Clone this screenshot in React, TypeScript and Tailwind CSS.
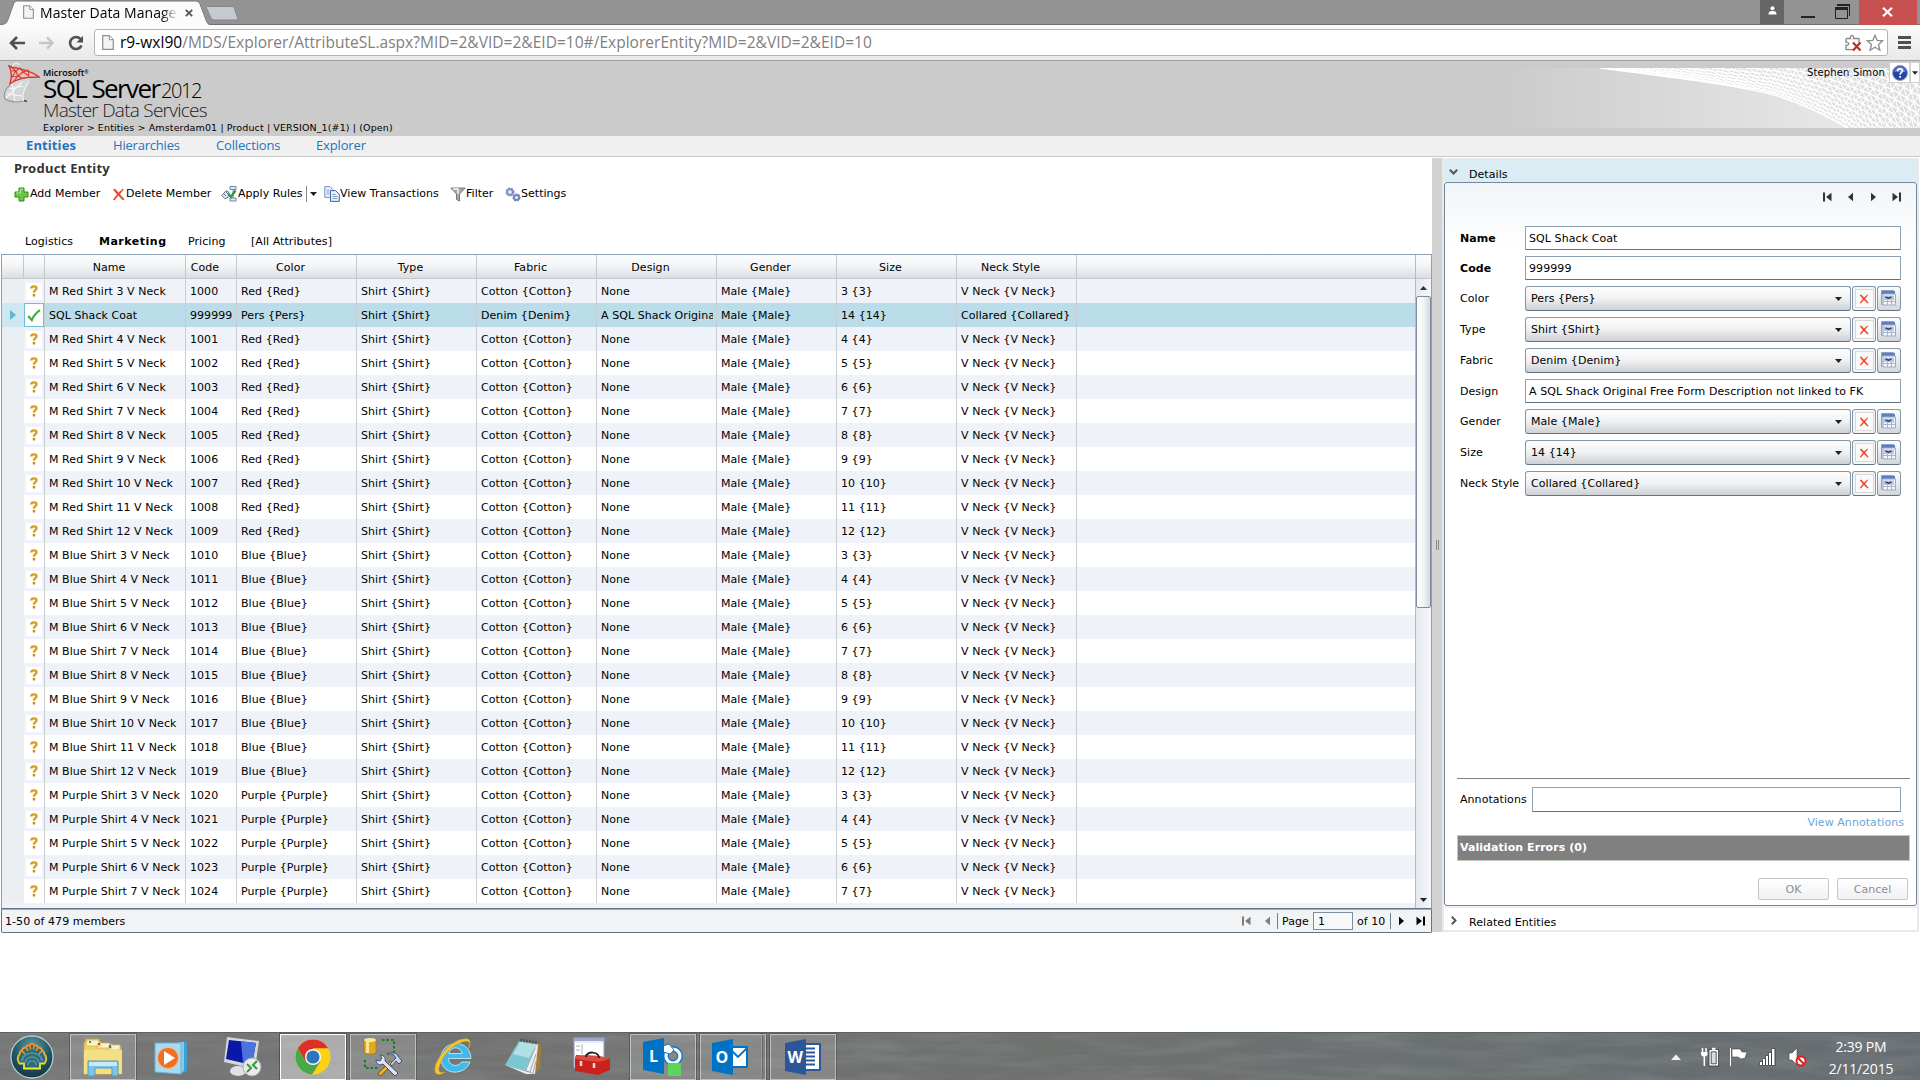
import React from 'react';

interface Member {
  name: string;
  code: string;
  color: string;
  type: string;
  fabric: string;
  design: string;
  gender: string;
  size: string;
  neck: string;
  selected?: boolean;
}

const pair = (value: string | number) => `${value} {${value}}`;

const buildMember = (color: string, size: number, code: number): Member => ({
  name: `M ${color} Shirt ${size} V Neck`,
  code: String(code),
  color: pair(color),
  type: pair('Shirt'),
  fabric: pair('Cotton'),
  design: 'None',
  gender: pair('Male'),
  size: pair(size),
  neck: pair('V Neck'),
});

const buildRange = (color: string, count: number, firstCode: number) =>
  Array.from({ length: count }, (_, i) => buildMember(color, i + 3, firstCode + i));

const coat: Member = {
  name: 'SQL Shack Coat',
  code: '999999',
  color: pair('Pers'),
  type: pair('Shirt'),
  fabric: pair('Denim'),
  design: 'A SQL Shack Original Free Form Description not linked to FK',
  gender: pair('Male'),
  size: pair(14),
  neck: pair('Collared'),
  selected: true,
};

const [firstRed, ...otherReds] = buildRange('Red', 10, 1000);
const members: Member[] = [
  firstRed,
  coat,
  ...otherReds,
  ...buildRange('Blue', 10, 1010),
  ...buildRange('Purple', 5, 1020),
];

const columns: { key: Exclude<keyof Member, 'selected'>; label: string; width: string }[] = [
  { key: 'name', label: 'Name', width: 'w-[141px]' },
  { key: 'code', label: 'Code', width: 'w-[51px]' },
  { key: 'color', label: 'Color', width: 'w-[120px]' },
  { key: 'type', label: 'Type', width: 'w-[120px]' },
  { key: 'fabric', label: 'Fabric', width: 'w-[120px]' },
  { key: 'design', label: 'Design', width: 'w-[120px]' },
  { key: 'gender', label: 'Gender', width: 'w-[120px]' },
  { key: 'size', label: 'Size', width: 'w-[120px]' },
  { key: 'neck', label: 'Neck Style', width: 'w-[120px]' },
];

/* ---------- Icons ---------- */

const PageIcon: React.FC<{ className?: string }> = ({ className }) => (
  <svg className={className} width="12" height="15" viewBox="0 0 12 15">
    <path d="M.7.7h6.6l4 4v9.6H.7z" fill="#f4f4f4" stroke="#8e8e8e" strokeWidth="1.2" />
    <path d="M7.3.7v4h4" fill="#fff" stroke="#8e8e8e" />
  </svg>
);

const PlusIcon = () => (
  <svg width="15" height="15" viewBox="0 0 15 15">
    <path d="M5 1h5v4h4v5h-4v4H5v-4H1V5h4z" fill="#6cc644" stroke="#2f8a1c" />
    <path d="M6 2.2h3M2.2 6h4V2.5" fill="none" stroke="#b8eaa0" />
  </svg>
);

const CrossIcon: React.FC<{ size?: number }> = ({ size = 13 }) => (
  <svg width={size} height={size} viewBox="0 0 13 13">
    <path d="M1 1.5 3 .7 6.500 4.600 11 .5l.8.8L8 6.300l4.500 5-1.500 1.200-4.600-4.700L2.500 12.500 1 11.500l4-5z" fill="#ef4a30" />
  </svg>
);

const RulesIcon = () => (
  <svg width="16" height="16" viewBox="0 0 16 16">
    <path d="M9 .5h6v3H9zM9 12h6v3H9zM12 4v8" fill="#dfe9f7" stroke="#6b86b5" />
    <path d="M.8 9.5 5 4.800l3 1.500-1 5-3 1.500z" fill="#e4e8ef" stroke="#5e6f8e" />
    <path d="M3 8l2 2M5 6l2 2" stroke="#5e6f8e" />
    <path d="m7.500 8 2.500 3 4.500-6.500" fill="none" stroke="#2c9a28" strokeWidth="2.2" />
  </svg>
);

const TransactionsIcon = () => (
  <svg width="16" height="16" viewBox="0 0 16 16">
    <path d="M.8.6h5l3 3v7.800h-8z" fill="#eef4fc" stroke="#6d8fc2" />
    <path d="M6.500 4.600h5l3.800 3.600v7.200H6.500z" fill="#e6effa" stroke="#41639c" />
    <path d="M2.500 4h3M2.500 6h3M2.500 8h3M8.500 8.500h3M8.500 10.500h5M8.500 12.500h5" stroke="#7f9fd0" />
  </svg>
);

const FilterIcon = () => (
  <svg width="16" height="15" viewBox="0 0 16 15">
    <path d="M.8 1h14.400L9.500 7v7l-3-1.500V7z" fill="#a6a8aa" stroke="#77797b" />
    <path d="M3 2h5L8 7" fill="none" stroke="#f4f4f4" strokeWidth="1.5" />
  </svg>
);

const GearsIcon = () => (
  <svg width="16" height="15" viewBox="0 0 16 15">
    <circle cx="5" cy="5" r="3.2" fill="#c4d0ec" stroke="#7285bd" strokeWidth="2.6" strokeDasharray="1.700 .9" />
    <circle cx="5" cy="5" r="3" fill="none" stroke="#8394c8" strokeWidth="1.5" />
    <circle cx="5" cy="5" r="1.1" fill="#fff" />
    <circle cx="11.5" cy="10.5" r="2.8" fill="#c4d0ec" stroke="#5e72b0" strokeWidth="2.4" strokeDasharray="1.600 .8" />
    <circle cx="11.5" cy="10.5" r="2.6" fill="none" stroke="#7285bd" strokeWidth="1.5" />
    <circle cx="11.5" cy="10.5" r="1" fill="#fff" />
  </svg>
);

const CaretIcon: React.FC<{ className?: string }> = ({ className }) => (
  <svg className={className} width="7" height="4" viewBox="0 0 7 4">
    <path d="M0 0h7L3.500 4z" fill="#222" />
  </svg>
);

const StepIcon: React.FC<{ kind: 'first' | 'prev' | 'next' | 'last'; fill?: string }> = ({ kind, fill = '#333' }) => (
  <svg width="9" height="10" viewBox="0 0 9 10">
    {kind === 'first' && <path d="M0 .5h2v9H0zM8.500.8v8.400L3 5z" fill={fill} />}
    {kind === 'prev' && <path d="M7 .8v8.400L2 5z" fill={fill} />}
    {kind === 'next' && <path d="M2 .8v8.400L7 5z" fill={fill} />}
    {kind === 'last' && <path d="M7 .5h2v9H7zM.5.8v8.400L6 5z" fill={fill} />}
  </svg>
);

const QuestionIcon = () => (
  <svg width="8" height="12" viewBox="0 0 8 12">
    <path d="M1.200 3.500C1.300.7 6.600.6 6.500 3.300 6.400 5 4 5.200 3.900 7.600" fill="none" stroke="#d99a1c" strokeWidth="2.3" />
    <path d="M2.700 9h2.500v2.500H2.700z" fill="#c98a12" />
  </svg>
);

const CheckIcon = () => (
  <svg width="14" height="13" viewBox="0 0 14 13">
    <path d="m1.200 7 3.600 4.200C6.500 7 9.500 3.500 13 1.200" fill="none" stroke="#46a83c" strokeWidth="2.1" />
  </svg>
);

const EntityViewIcon = () => (
  <svg width="15" height="16" viewBox="0 0 15 16">
    <path d="M.5.5h12v14H.5z" fill="#dfe6f2" stroke="#8ea0c4" />
    <path d="M1 1h13v3H1z" fill="#5b7fc4" />
    <path d="M2 4h12.500v11H2z" fill="#f3f6fb" stroke="#9aabca" />
    <path d="M2 11.500h12M6.500 10v5M10.500 10v5" stroke="#a5b4d2" />
    <path d="M2 5.500h11v4.500H2z" fill="#b7c7e2" />
    <path d="M4.500 7l3 1.200 3-1.200" fill="none" stroke="#333f58" strokeWidth="1.4" />
  </svg>
);

/* ---------- Browser window ---------- */

const TitleBar = () => (
  <div className="h-[25px] bg-[#939393] border-b border-[#6e6e6e] flex relative z-10">
    <svg className="absolute left-0 top-0" width="240" height="26">
      <path d="M0 24.500c6 0 7-2 8-5L13.500 4c1-2 2-3 4-3h178c2 0 3.500 1 4.500 3l6 16c1 3 2 5 7 5v1H0z" fill="#fbfbfb" stroke="#777" strokeWidth="1" />
      <path d="M0 25h214v1H0z" fill="#fbfbfb" />
      <path d="M207.500 6.500h24c1.500 0 2.500.8 3 2l3 9c.4 1.500-.4 2.500-2 2.500h-20c-3 0-4-.8-5-3l-4-9c-.5-1 0-1.500 1-1.500z" fill="#c5c9d1" stroke="#858585" />
    </svg>
    <div className="relative w-[214px] flex items-center pl-[23px]">
      <PageIcon className="w-[11px] h-[14px]" />
      <div className="ml-[6px] w-[138px] pt-px overflow-hidden whitespace-nowrap text-[14px] leading-5 tracking-[0.04px] text-black [mask-image:linear-gradient(to_right,#000_88%,transparent)]">
        Master Data Manager
      </div>
      <svg className="ml-[7px] mt-px" width="8" height="8" viewBox="0 0 8 8">
        <path d="m.8.8 6.400 6.400M7.200.8.8 7.200" stroke="#555" strokeWidth="1.8" />
      </svg>
    </div>
    <div className="ml-auto flex">
      <div className="w-[24px] h-[24px] bg-[#666] flex items-center justify-center pb-1">
        <svg width="9" height="9" viewBox="0 0 9 9">
          <circle cx="4.5" cy="2.2" r="2" fill="#fff" />
          <path d="M.5 8.500c0-3 1.500-3.500 4-3.500s4 .5 4 3.500z" fill="#fff" />
        </svg>
      </div>
      <svg width="75" height="24">
        <path d="M17 16h14v2H17z" fill="#222" />
        <path d="M51.500 8h12v10.500h-12z" fill="none" stroke="#222" />
        <path d="M51 7h13v3H51zM53 4h13v12h-1V6H53z" fill="#222" />
      </svg>
      <div className="w-[58px] h-[25px] bg-[#c75050] flex items-center justify-center pr-px pb-px">
        <svg width="11" height="10" viewBox="0 0 11 10">
          <path d="m1 .8 9 8.400M10 .8 1 9.200" stroke="#fff" strokeWidth="2.2" />
        </svg>
      </div>
      <div className="w-[3px]" />
    </div>
  </div>
);

const AddressBar = () => (
  <div className="h-[36px] bg-linear-to-b from-[#fbfbfb] to-[#e9e9e9] border-b border-[#a0a0a0] flex items-center">
    <svg className="ml-[9px]" width="17" height="14" viewBox="0 0 17 14">
      <path d="M16 7H2.500M8 1 2 7l6 6" fill="none" stroke="#4f4f4f" strokeWidth="2.6" />
    </svg>
    <svg className="ml-[13px]" width="16" height="14" viewBox="0 0 17 14">
      <path d="M0 7h14M8.500 1l6 6-6 6" fill="none" stroke="#c6c6c6" strokeWidth="2.6" />
    </svg>
    <svg className="ml-[13px]" width="16" height="16" viewBox="0 0 16 16">
      <path d="M13.500 10.500A6 6 0 1 1 12.500 4" fill="none" stroke="#4f4f4f" strokeWidth="2.6" />
      <path d="M15 .8v6.700H8.500z" fill="#4f4f4f" />
    </svg>
    <div className="ml-[10px] flex-1 h-[27px] bg-white border border-[#b3b3b3] rounded-[3px] flex items-center">
      <PageIcon className="ml-[7px]" />
      <div className="ml-[6px] pt-px text-[15.5px] tracking-[0.03px] whitespace-nowrap text-[#808080]">
        <span className="text-black">r9-wxl90</span>/MDS/Explorer/AttributeSL.aspx?MID=2&amp;VID=2&amp;EID=10#/ExplorerEntity?MID=2&amp;VID=2&amp;EID=10
      </div>
      <svg className="ml-auto" width="17" height="18" viewBox="0 0 17 18">
        <path d="M1 4.500h4.500c-1-4 4-4 3.200 0H14V9M1 4.500v3.800c3.500-.8 3.500 3.500 0 2.800v4.500h7" fill="#f6f6f6" stroke="#8b8b8b" strokeWidth="1.3" />
        <path d="m8 8.500 7.500 8M15.500 8.500 8 16.500" stroke="#c8281e" strokeWidth="2.2" />
      </svg>
      <svg className="ml-[4px] mr-[3px]" width="18" height="18" viewBox="0 0 18 18">
        <path d="m9 1.200 2.200 5.200 5.600.4-4.300 3.700 1.400 5.700L9 13.200l-4.900 3 1.400-5.700L1.200 6.800l5.600-.4z" fill="#fff" stroke="#8b8b8b" strokeWidth="1.3" />
      </svg>
    </div>
    <svg className="ml-[10px] mr-[9px]" width="13" height="14">
      <path d="M0 0h13v3H0zM0 5h13v3H0zM0 10h13v3H0z" fill="#505050" />
    </svg>
  </div>
);

/* ---------- Page header ---------- */

// Lower edge of the banner's wire mesh; the net is spun from it up and to the right
const meshEdge = [[100, 0], [140, 6], [174, 10], [207, 15], [238, 20], [267, 25], [288, 32], [307, 39], [328, 49], [347, 59], [366, 72], [384, 88], [400, 106], [416, 126], [430, 148]];
const MESH_COLS = 42;
const MESH_ROWS = 16;

const meshNode = (i: number, j: number) => {
  const t = (i / MESH_COLS) * (meshEdge.length - 1);
  const k = Math.min(Math.floor(t), meshEdge.length - 2);
  const [ax, ay] = meshEdge[k];
  const [bx, by] = meshEdge[k + 1];
  const reach = j * (1.2 + i * 0.09) + j * j * 0.16;
  const x = ax + (bx - ax) * (t - k) + reach * (0.25 + i * 0.012);
  const y = ay + (by - ay) * (t - k) - reach * 0.85;
  return `${x.toFixed(1)} ${y.toFixed(1)}`;
};

const range = (n: number) => Array.from({ length: n + 1 }, (_, i) => i);
const meshRows = range(MESH_ROWS).map((j) => `M${range(MESH_COLS).map((i) => meshNode(i, j)).join('L')}`).join('');
const meshRibs = range(MESH_COLS).map((i) => `M${range(MESH_ROWS).map((j) => meshNode(i, j)).join('L')}`).join('');
const meshDiagonals = range(MESH_COLS + MESH_ROWS)
  .map((i) => `M${range(MESH_ROWS).filter((j) => i - j >= 0 && i - j <= MESH_COLS).map((j) => meshNode(i - j, j)).join('L')}`)
  .join('');

const BannerMesh = () => (
  <svg className="w-[420px] h-[60px]" viewBox="0 0 420 60">
    <defs>
      <clipPath id="mesh">
        <path d="M100 0C180 10 225 16 267 25c30 8 55 20 81 35h72V0z" />
      </clipPath>
    </defs>
    <g clipPath="url(#mesh)">
      <path d="M0 0h420v60H0z" fill="#dedede" />
      <path d={meshRows} fill="none" stroke="#fff" strokeWidth="1.4" />
      <path d={meshRibs} fill="none" stroke="#fff" strokeWidth="1.2" />
      <path d={meshDiagonals} fill="none" stroke="#fff" strokeWidth="1.1" />
    </g>
    <path d="M100 0C180 10 225 16 267 25c30 8 55 20 81 35" fill="none" stroke="#fff" strokeWidth="1.5" />
  </svg>
);

const SqlServerMark = () => (
  <svg width="38" height="42" viewBox="0 0 38 42">
    <path d="M7 4c3 5 3 11 1 18 8-6 17-7 29-7C30 9 17 8 7 4z" fill="#dfc4c2" />
    <path d="M7 4c10 3 22 4 30 11-12 0-21 1-29 7C10 15 10 9 7 4z" fill="none" stroke="#d7342c" strokeWidth="1.4" />
    <path d="M9 5l5 4 4-3 3 4 5-2 1 5M10 9l4 0 2 5 5-4 6 4M10 15l6-1-6 7M16 14l4 2M14 9l-4 6" fill="none" stroke="#e0362e" strokeWidth="1.1" />
    <path d="M8 23C3 27 1 33 3 37c5 3 13 4 19 2-3-5 0-12 6-23-8 1-16 3-20 7z" fill="#d3d6da" />
    <path d="M8 23C3 27 1 33 3 37c5 3 13 4 19 2" fill="none" stroke="#8f96a0" strokeWidth="1.1" />
    <path d="M5 32l15 2M10 22l3 17M4 36l16-16M7 27l14-3M22 39c-3-5 0-12 5-20" fill="none" stroke="#f7f7f7" strokeWidth="1.1" />
    <path d="M11 5C11 1 15 0 18 3" fill="none" stroke="#e8e8e8" strokeWidth="1.4" />
    <path d="M22 38.500l3 1" stroke="#444" strokeWidth="1.5" />
  </svg>
);

const Header = () => (
  <header className="h-[75px] bg-[#cbcbcb] flex">
    <div className="pl-[2px] pt-[1px]">
      <SqlServerMark />
    </div>
    <div className="ml-[3px] whitespace-nowrap text-black">
      <div className="mt-[6px] h-[10px] text-[9px] leading-[11px] font-semibold">Microsoft<span className="text-[5px] align-top">®</span></div>
      <div className="h-[23px] flex items-center text-[26px] tracking-[-1.6px] leading-[23px]">
        <span className="w-[118px]">SQL Server</span>
        <span className="text-[20px] font-light tracking-[-1.4px] pt-[3px]">2012</span>
      </div>
      <div className="h-[22px] text-[19px] leading-[20px] font-light tracking-[-0.75px] text-[#1c1c1c]">Master Data Services</div>
      <div className="font-['DejaVu_Sans'] text-[9.5px] leading-[12px] tracking-[0.12px]">
        Explorer &gt; Entities &gt; Amsterdam01 | Product | VERSION_1(#1) | (Open)
      </div>
    </div>
    <div className="ml-auto mt-[7px] w-[420px] h-[60px] relative bg-linear-to-r from-[#cbcbcb] to-[#eeeeee]">
      <BannerMesh />
      <div className="absolute right-0 top-[-6px] flex items-center h-[21px]">
        <span className="font-['DejaVu_Sans'] text-[10px] tracking-[0.15px]">Stephen Simon</span>
        <div className="ml-[4px] w-[21px] h-[21px] bg-white border border-[#d0d0d0] flex items-center justify-center">
          <svg width="16" height="16" viewBox="0 0 16 16">
            <circle cx="8" cy="8" r="7.5" fill="#2445a8" stroke="#98a0b8" />
            <path d="M2.500 7a5.500 5.500 0 0 1 11 0z" fill="#5b80d8" />
            <path d="M5.500 6c.2-3 5.200-2.800 5 0C10.300 7.500 8.200 7.600 8.100 9.800" fill="none" stroke="#fff" strokeWidth="1.7" />
            <path d="M7.200 11h1.800v1.800H7.200z" fill="#fff" />
          </svg>
        </div>
        <div className="w-[10px] h-[21px] bg-white border border-[#d0d0d0] flex items-center justify-center">
          <CaretIcon className="w-[6px]" />
        </div>
      </div>
    </div>
  </header>
);

const MainNav = () => (
  <nav className="h-[21px] bg-[#f0f0f0] border-b border-[#cacaca] flex items-center pl-[26px] text-[13px] text-[#1f74bc]">
    <a className="w-[87px] font-bold tracking-[0.1px]">Entities</a>
    <a className="w-[103px] tracking-[-0.2px]">Hierarchies</a>
    <a className="w-[100px] tracking-[-0.15px]">Collections</a>
    <a className="tracking-[-0.15px]">Explorer</a>
  </nav>
);

/* ---------- Member grid ---------- */

const MemberToolbar = () => (
  <div className="h-[20px] mt-[7px] pl-[14px] flex items-center whitespace-nowrap tracking-[0.03px]">
    <div className="w-[98px] flex items-center gap-px"><PlusIcon />Add Member</div>
    <div className="w-[109px] flex items-center gap-px"><CrossIcon />Delete Member</div>
    <div className="w-[85px] flex items-center gap-px"><RulesIcon />Apply Rules</div>
    <div className="w-px h-[16px] bg-[#888]" />
    <CaretIcon className="ml-[3px] mr-[7px]" />
    <div className="w-[126px] flex items-center"><TransactionsIcon />View Transactions</div>
    <div className="w-[55px] flex items-center"><FilterIcon />Filter</div>
    <div className="flex items-center"><GearsIcon />Settings</div>
  </div>
);

const MemberRow: React.FC<{ member: Member; striped: boolean }> = ({ member, striped }) => {
  const tone = member.selected ? 'bg-[#badde9]' : striped ? 'bg-[#eff3f9]' : 'bg-white';
  return (
    <div className={`h-[24px] shrink-0 flex ${tone}`}>
      <div className={`w-[22px] flex items-center pl-[8px] ${member.selected ? 'bg-[#cfe7f0]' : 'bg-[#ebeff4]'}`}>
        {member.selected && (
          <svg width="6" height="10"><path d="M0 0v10l6-5z" fill="#5db8d8" /></svg>
        )}
      </div>
      {member.selected ? (
        <div className="w-[20px] border border-[#6fbdd6] bg-white flex items-center justify-center"><CheckIcon /></div>
      ) : (
        <div className="w-[20px] flex items-center justify-center">
          <div className="w-[16px] h-[17px] bg-white flex items-center justify-center"><QuestionIcon /></div>
        </div>
      )}
      <div className="w-px bg-[#cacccf]" />
      {columns.map((column) => (
        <div key={column.key} className={`${column.width} border-r border-[#cacccf] pl-[4px] pr-[3px] pt-[2px] flex items-center`}>
          <div className="overflow-hidden whitespace-nowrap w-full">{member[column.key]}</div>
        </div>
      ))}
    </div>
  );
};

const MemberGrid = () => (
  <div className="h-[655px] ml-px w-[1431px] border border-[#8fa0b0] border-b-[#5f7486] flex">
    <div className="flex-1 flex flex-col overflow-hidden">
      <div className="h-[24px] shrink-0 flex bg-linear-to-b from-[#fcfdfd] via-[#f3f4f6] to-[#dadde1] border-b border-[#c4c7ca]">
        <div className="w-[22px] border-r border-[#c4c7ca]" />
        <div className="w-[21px] border-r border-[#c4c7ca]" />
        {columns.map((column) => (
          <div key={column.key} className={`${column.width} border-r border-[#c4c7ca] flex items-center justify-center pr-[12px] pt-[2px]`}>
            {column.label}
          </div>
        ))}
      </div>
      {members.map((member, index) => (
        <MemberRow key={member.code} member={member} striped={index % 2 === 0} />
      ))}
      <div className="flex-1 bg-[#eff3f7]" />
    </div>
    <div className="w-[16px] border-l border-[#b3bcc6] flex flex-col">
      <div className="h-[24px] bg-linear-to-b from-[#fcfdfd] via-[#f3f4f6] to-[#dadde1] border-b border-[#c4c7ca]" />
      <div className="flex-1 flex flex-col items-center bg-linear-to-r from-[#e4e9ef] to-[#f5f7f9]">
        <div className="h-[17px] flex items-center">
          <svg width="7" height="4"><path d="M0 4h7L3.500 0z" fill="#333" /></svg>
        </div>
        <div className="w-[15px] h-[312px] rounded-[2px] border border-[#7e8e9e] bg-linear-to-r from-[#fdfdfd] via-[#f2f4f6] to-[#d5dae0]" />
        <div className="mt-auto h-[17px] flex items-center"><CaretIcon /></div>
      </div>
    </div>
  </div>
);

const Pager = () => (
  <div className="h-[24px] ml-px w-[1431px] border border-[#5f7486] border-t-[#9db0c0] bg-[#f1f3f5] rounded-b-[2px] flex items-center pl-[3px] pr-[6px]">
    <span className="pt-[2px]">1-50 of 479 members</span>
    <div className="ml-auto flex items-center">
      <StepIcon kind="first" fill="#7d7d7d" />
      <div className="w-[12px]" />
      <StepIcon kind="prev" fill="#7d7d7d" />
      <div className="ml-[5px] w-px h-[16px] bg-[#6d8295]" />
      <span className="ml-[4px] w-[31px] pt-[2px]">Page</span>
      <div className="w-[40px] h-[18px] border border-[#7d90a2] bg-[#f7f9f9] pl-[4px] leading-[17px]">1</div>
      <span className="ml-[4px] w-[33px] pt-[2px] whitespace-nowrap">of 10</span>
      <div className="w-px h-[16px] bg-[#6d8295]" />
      <div className="w-[6px]" />
      <StepIcon kind="next" fill="#000" />
      <div className="w-[10px]" />
      <StepIcon kind="last" fill="#000" />
    </div>
  </div>
);

const MembersPanel = () => (
  <section className="w-[1432px]">
    <h1 className="mt-px h-[18px] leading-[18px] pl-[14px] font-['Noto_Sans'] text-[13px] font-bold tracking-[0.25px] text-[#333]">Product Entity</h1>
    <MemberToolbar />
    <div className="mt-[28px] mb-[2px] h-[20px] pl-[25px] flex items-center">
      <span className="w-[74px]">Logistics</span>
      <span className="w-[89px] font-bold tracking-[0.5px]">Marketing</span>
      <span className="w-[63px]">Pricing</span>
      <span>[All Attributes]</span>
    </div>
    <MemberGrid />
    <Pager />
  </section>
);

/* ---------- Details panel ---------- */

interface Field {
  label: string;
  value: string;
  lookup?: boolean;
  required?: boolean;
}

const fields: Field[] = [
  { label: 'Name', value: coat.name, required: true },
  { label: 'Code', value: coat.code, required: true },
  { label: 'Color', value: coat.color, lookup: true },
  { label: 'Type', value: coat.type, lookup: true },
  { label: 'Fabric', value: coat.fabric, lookup: true },
  { label: 'Design', value: coat.design },
  { label: 'Gender', value: coat.gender, lookup: true },
  { label: 'Size', value: coat.size, lookup: true },
  { label: 'Neck Style', value: coat.neck, lookup: true },
];

const FieldRow: React.FC<{ field: Field }> = ({ field }) => (
  <div className="flex items-center">
    <div className={`w-[65px] pt-px whitespace-nowrap ${field.required ? 'font-bold' : ''}`}>{field.label}</div>
    {field.lookup ? (
      <div className="flex gap-px">
        <div className="w-[326px] h-[25px] rounded-[3px] border border-[#8497a8] border-b-[#5f7486] bg-linear-to-b from-[#fefefe] via-[#f0f1f2] to-[#cdd0d5] pl-[5px] pr-[8px] flex items-center justify-between">
          <span className="pt-px">{field.value}</span>
          <CaretIcon />
        </div>
        <div className="w-[24px] h-[25px] rounded-[3px] border border-[#8497a8] border-b-[#5f7486] bg-[#f4f5f6] flex items-center justify-center">
          <div className="w-[19px] h-[19px] border border-[#d8d8d8] bg-[#fafafa] flex items-center justify-center"><CrossIcon size={10} /></div>
        </div>
        <div className="w-[24px] h-[25px] rounded-[3px] border border-[#8497a8] border-b-[#5f7486] bg-linear-to-b from-[#fefefe] to-[#d3d6da] flex items-center justify-center pb-[2px] pr-px">
          <EntityViewIcon />
        </div>
      </div>
    ) : (
      <div className="w-[376px] h-[24px] rounded-[1px] border border-[#8fa0b0] border-b-[#5f7486] bg-white px-[3px] pt-[2px] flex items-center whitespace-nowrap tracking-[0.08px]">
        {field.value}
      </div>
    )}
  </div>
);

const DetailsPanel = () => (
  <aside className="w-[477px] h-[774px] border-2 border-[#e9e9e9] bg-white">
    <div className="h-[22px] bg-[#dcecf3] flex items-center pl-[5px] pt-[7px]">
      <svg className="mb-[5px]" width="9" height="6"><path d="m.8.8 3.700 3.700L8.200.8" fill="none" stroke="#555" strokeWidth="2" /></svg>
      <span className="ml-[11px]">Details</span>
    </div>
    <div className="h-[724px] rounded-[3px] border border-[#73889b] bg-linear-to-b from-[#f1f5f8] to-white to-[9%] flex flex-col">
      <div className="mt-[9px] mr-[15px] h-[10px] flex justify-end gap-[14px]">
        <StepIcon kind="first" />
        <StepIcon kind="prev" />
        <StepIcon kind="next" />
        <StepIcon kind="last" />
      </div>
      <div className="mt-[24px] ml-[15px] flex flex-col gap-[6px]">
        {fields.map((field) => <FieldRow key={field.label} field={field} />)}
      </div>
      <div className="mt-auto ml-[12px] mr-[6px] border-t border-[#808080] pt-[8px]">
        <div className="flex items-center pl-[3px]">
          <span className="w-[72px]">Annotations</span>
          <div className="w-[369px] h-[25px] rounded-[1px] border border-[#8fa0b0] border-b-[#5f7486] bg-white" />
        </div>
        <div className="h-[23px] flex items-center justify-end pr-[6px] pb-px text-[#6ba7d9]">View Annotations</div>
        <div className="h-[26px] border border-[#c6c6c0] bg-[#808080] text-white font-bold flex items-center pl-[2px]">Validation Errors (0)</div>
        <div className="mt-[17px] mb-[5px] flex justify-end gap-[8px] pr-[2px] text-[#8d8f92]">
          <div className="w-[71px] h-[22px] rounded-[2px] border border-[#c1c8cf] bg-linear-to-b from-white to-[#eff0f2] flex items-center justify-center pt-px">OK</div>
          <div className="w-[71px] h-[22px] rounded-[2px] border border-[#c1c8cf] bg-linear-to-b from-white to-[#eff0f2] flex items-center justify-center pt-px">Cancel</div>
        </div>
      </div>
    </div>
    <div className="h-[24px] border-t-2 border-[#f0f0f0] flex items-center pl-[7px] pt-[7px]">
      <svg className="mb-[5px]" width="6" height="9"><path d="m.8.8 3.700 3.700L.8 8.200" fill="none" stroke="#555" strokeWidth="2" /></svg>
      <span className="ml-[12px]">Related Entities</span>
    </div>
  </aside>
);

/* ---------- Windows taskbar ---------- */

const ShellIcon = () => (
  <svg width="44" height="44" viewBox="0 0 44 44">
    <defs>
      <radialGradient id="orb" cx=".5" cy=".25" r=".8">
        <stop offset="0" stopColor="#5d9da0" />
        <stop offset=".5" stopColor="#245c68" />
        <stop offset="1" stopColor="#10303f" />
      </radialGradient>
      <linearGradient id="shell" x1="0" y1="0" x2="0" y2="1">
        <stop offset="0" stopColor="#f08a2c" />
        <stop offset="1" stopColor="#ecec3c" />
      </linearGradient>
    </defs>
    <circle cx="22" cy="22" r="21" fill="url(#orb)" stroke="#b4ccd2" strokeWidth="1.3" />
    <path d="M14 33.500v-5h-4.500q-2.500-4-1.500-6 0-2 1.500-3 0-3 2.500-4 .5-3 3.500-3 1-2 3.500-2 1.500-1.500 3-1.500t3 1.500q2.500 0 3.500 2 3 0 3.500 3 2.500 1 2.500 4 1.500 1 1.500 3 1 2-1.500 6H30v5z" fill="#2d6c77" stroke="url(#shell)" strokeWidth="1.8" />
    <path d="M12 16l3 3M16 12l2 4M20 10.500l.5 4M24 10.500l-.5 4M28 12l-2 4M32 16l-3 3" stroke="#f09030" strokeWidth="1.6" />
    <path d="M12 26a10 8 0 0 1 20 0M15 28a7 6 0 0 1 14 0M18 30a4 4 0 0 1 8 0" fill="none" stroke="#5596a2" strokeWidth="1.6" />
  </svg>
);

const ExplorerIcon = () => (
  <svg width="40" height="40" viewBox="0 0 40 40">
    <path d="M3 2h13l2 5h11l1 3h8v27H1V7z" fill="#f0d367" stroke="#d2a93c" />
    <path d="M4 3h11l3 6H3zM15 6h11l3 5H14zM26 8h11v5H26z" fill="#fbf3d0" stroke="#d8b858" strokeWidth=".8" />
    <path d="M6 4h2v2H6z" fill="#2f9e44" /><path d="M15 6h2v2h-2z" fill="#d33" /><path d="M26 8h2v3h-2z" fill="#2b7fd0" />
    <path d="M1 13h38v24H1z" fill="#f5df83" />
    <path d="M5 24h30v15h-6v-8H12v8H5z" fill="#7ec3e6" stroke="#4a9ccb" />
    <path d="M6 25h28v4H6z" fill="#c9e9f7" />
  </svg>
);

const MediaPlayerIcon = () => (
  <svg className="mr-[5px] mt-[3px]" width="34" height="34" viewBox="0 0 34 34">
    <path d="M28 1h5v29l-6 3z" fill="#3f9fd2" /><path d="M25 1h5v29l-5 3z" fill="#86cbe9" />
    <path d="M1 2h26v31L1 31z" fill="#a9dbf0" stroke="#68b3d8" />
    <circle cx="14" cy="17" r="10.5" fill="#f07023" stroke="#f9b98c" />
    <path d="M10 10v14l11-7z" fill="#fff" />
  </svg>
);

const RemoteDesktopIcon = () => (
  <svg width="38" height="40" viewBox="0 0 38 40">
    <ellipse cx="14" cy="34" rx="8" ry="5" fill="#e0e3e5" />
    <path d="M3 0l32 4-4 28L0 25z" fill="#d3d7da" />
    <path d="M5 3l27 3-4 22L2 22z" fill="#0b17a8" />
    <path d="M17 4l15 2-4 22-9-2z" fill="#4c72e0" />
    <circle cx="28" cy="30" r="9" fill="#e9ebec" stroke="#a8acae" />
    <path d="m23 27 4 4-4 4M33 24l-4 4 4 4" fill="none" stroke="#3d9a3b" strokeWidth="2" />
  </svg>
);

const ChromeIcon = () => (
  <svg width="36" height="36" viewBox="0 0 36 36">
    <circle cx="18" cy="18" r="17.5" fill="#fcd116" />
    <path d="M2.800 9.300A17.500 17.500 0 0 1 33.200 9.300H18L10.500 22.500z" fill="#dc2f2a" />
    <path d="M2.800 9.300A17.500 17.500 0 0 0 17 35.500L25.500 22.400 10.500 22.500z" fill="#47a847" />
    <circle cx="18" cy="18" r="8" fill="#fff" />
    <circle cx="18" cy="18" r="6.6" fill="#2f76bd" />
  </svg>
);

const DbToolsIcon = () => (
  <svg width="40" height="40" viewBox="0 0 40 40">
    <path d="M1 3v12c0 3 12 3 12 0V3z" fill="#e5a91c" stroke="#a8740c" strokeWidth=".7" />
    <path d="M3 4v12h3V4z" fill="#fbe598" />
    <ellipse cx="7" cy="3" rx="6" ry="2" fill="#fbe598" />
    <path d="M19 3h12v13M2 23v8h14" fill="none" stroke="#1f7a1f" strokeWidth="2" strokeDasharray="2.500 2" />
    <path d="M16 38l13-13" stroke="#7a5208" strokeWidth="4.5" />
    <path d="M16.500 37.500l12-12" stroke="#f0b52c" strokeWidth="2.8" />
    <path d="M35 36 22 24c1-4-2-6-5-6l2 3-2 3-4-1c0 4 4 6 7 4l12 12z" fill="#dfe5f0" stroke="#3f4f78" />
    <path d="M27 27l6-6-3-4-6 0c5-3 9-1 11 2l4 5-3 3-3-3-4 5z" fill="#c9d4ec" stroke="#3f4f78" />
  </svg>
);

const InternetExplorerIcon = () => (
  <svg width="38" height="38" viewBox="0 0 38 38">
    <path d="M37 20.500H14.500c0 8 10 9 13 3.500h8.500C31 38 8 38 7 21 6 2 36-1 37 20.500zM14.800 15.500H28c-1-7.500-12-7.500-13.200 0z" fill="#3fb9ee" stroke="#d5f0fb" strokeWidth=".8" fillRule="evenodd" />
    <path d="M7 24C12 12 26 2 34 3.500c4 1.500 1 6.500-1 8.500 5-7 4-12-3-11C18 2 2 19 1 31c-.5 7 6 6 10 3-5 2-9 0-4-10z" fill="#f7c52c" stroke="#e0a51a" strokeWidth=".6" />
  </svg>
);

const NotepadIcon = () => (
  <svg width="38" height="38" viewBox="0 0 38 38">
    <path d="M32 5l5 2-1 24-5 4z" fill="#a57c31" />
    <path d="M15 3l19 3-3 30-10-4z" fill="#eceff1" />
    <path d="M15 3l18 3L21 33 1 27z" fill="#7cc6d0" />
    <path d="M16 4l17 2-8 14L9 16z" fill="#b2e0e6" />
    <path d="M22 32l9-22M26 34l6-18M29 35l3-12" stroke="#9fa8ad" />
    <path d="M16 2l18 3" stroke="#555" strokeWidth="3" strokeDasharray="2 1" />
    <path d="M1 27l20 6 10 3-9 0z" fill="#e7eef0" />
  </svg>
);

const ToolboxIcon = () => (
  <svg className="mr-[5px]" width="38" height="40" viewBox="0 0 38 40">
    <path d="M2 1h30v30H2z" fill="#e9ebf3" stroke="#9da3bd" /><path d="M2 1h30v3H2z" fill="#9ba7cc" />
    <path d="M3 6h28v13H3z" fill="#fff" /><path d="M4 9h4M4 13h4M10 7v10" stroke="#a8aec4" />
    <path d="M4 18l22 2 12 2v11l-12 5-23-4V22z" fill="#c9211c" />
    <path d="M4 19l10-1 14 1 10 3-12 3-23-3z" fill="#dc4a40" />
    <path d="M14 20c0-6 13-6 13 1" fill="none" stroke="#2d2020" strokeWidth="2" />
    <path d="M9 24v5M22 26v5" stroke="#ddd" strokeWidth="2.5" />
  </svg>
);

const officeLabel = "fill-white font-['Open_Sans'] font-bold text-[16px]";

const LyncIcon = () => (
  <svg width="40" height="38" viewBox="0 0 40 38">
    <circle cx="30" cy="18" r="7" fill="none" stroke="#0b78c9" strokeWidth="6" />
    <circle cx="30" cy="18" r="7" fill="none" stroke="#fff" strokeWidth="3.2" />
    <path d="M20 8l6-2 5 6-4 4-7-2z" fill="#fff" stroke="#0b78c9" />
    <path d="M0 4l21-4v36L0 32z" fill="#0072c6" />
    <text x="6" y="24" className={officeLabel}>L</text>
    <path d="M25 25h13v13H25z" fill="#5fd35a" />
  </svg>
);

const OutlookIcon = () => (
  <svg width="37" height="36" viewBox="0 0 37 36">
    <path d="M20 7h15q1 0 1 1v20q0 1-1 1H20z" fill="#0072c6" /><path d="M20 9h14v18H20z" fill="#fff" />
    <path d="M20 12l6 6 9-9" fill="none" stroke="#0072c6" strokeWidth="1.8" />
    <path d="M0 4l21-4v36L0 32z" fill="#0072c6" />
    <text x="3.5" y="24" className={officeLabel}>O</text>
  </svg>
);

const WordIcon = () => (
  <svg width="37" height="36" viewBox="0 0 37 36">
    <path d="M20 4h15q1 0 1 1v26q0 1-1 1H20z" fill="#2b579a" /><path d="M20 6h14v24H20z" fill="#fff" />
    <path d="M20 9.500h10M20 13.500h10M20 17.500h10M20 21.500h10M20 25.500h10" stroke="#2b579a" strokeWidth="1.8" />
    <path d="M0 4l21-4v36L0 32z" fill="#2b579a" />
    <text x="2.5" y="24" className={officeLabel}>W</text>
  </svg>
);

const Tile: React.FC<{ children: React.ReactNode; state?: 'idle' | 'open' | 'active' }> = ({ children, state = 'idle' }) => {
  const styles = {
    idle: 'border-transparent',
    open: 'border-white/45 bg-white/15 outline outline-black/20',
    active: 'border-white bg-white/40 outline outline-black/30',
  };
  return <div className={`w-[66px] h-[46px] mr-[4px] border flex items-center justify-center ${styles[state]}`}>{children}</div>;
};

const Taskbar = () => (
  <footer className="h-[48px] relative overflow-hidden bg-linear-to-r from-[#757575] via-[#6f716e] to-[#666d71] border-t border-[#5d6265]">
    <svg className="absolute inset-0" width="1920" height="48">
      <filter id="water" x="0" y="0" width="100%" height="100%">
        <feTurbulence type="fractalNoise" baseFrequency="0.012 0.09" numOctaves="4" seed="7" />
        <feColorMatrix values="0 0 0 0 .25  0 0 0 0 .27  0 0 0 0 .28  1.600 0 0 0 -.6" />
      </filter>
      <rect width="1920" height="48" filter="url(#water)" opacity=".6" />
    </svg>
    <div className="relative flex h-[47px] items-center">
      <div className="w-[70px] pl-[10px]"><ShellIcon /></div>
      <Tile state="open"><ExplorerIcon /></Tile>
      <Tile><MediaPlayerIcon /></Tile>
      <Tile><RemoteDesktopIcon /></Tile>
      <Tile state="active"><ChromeIcon /></Tile>
      <Tile state="open"><DbToolsIcon /></Tile>
      <Tile><InternetExplorerIcon /></Tile>
      <Tile><NotepadIcon /></Tile>
      <Tile><ToolboxIcon /></Tile>
      <Tile state="open"><LyncIcon /></Tile>
      <div className="w-[62px] h-[46px] border border-white/45 bg-white/15 outline outline-black/20 flex items-center justify-center pr-[2px]"><OutlookIcon /></div>
      <div className="w-[4px] h-[46px] mr-[4px] border border-l-0 border-white/45 bg-white/10 outline outline-black/20" />
      <Tile state="open"><WordIcon /></Tile>

      <div className="ml-auto mr-[24px] flex items-center text-white">
        <svg width="10" height="6"><path d="M0 6h10L5 .5z" fill="#f2f2f2" /></svg>
        <svg className="ml-[19px]" width="20" height="20" viewBox="0 0 20 20">
          <path d="M2.500 1v4M6 1v4M4.300 8v11" stroke="#fff" strokeWidth="1.5" /><path d="M1 5h6.500v3L5.500 9.500H3L1 8z" fill="#fff" />
          <path d="M9 2.500h9.500v16.500H9z" fill="#fff" stroke="#333" strokeWidth=".8" />
          <path d="M11.200 4.800h5v12h-5z" fill="#d8dadb" stroke="#444" strokeWidth=".9" /><path d="M12 .8h3.500v2H12z" fill="#fff" />
        </svg>
        <svg className="ml-[9px]" width="20" height="20" viewBox="0 0 20 20">
          <path d="M1.500 1v18" stroke="#333" strokeWidth="3" />
          <path d="M1.500 1v18" stroke="#fff" strokeWidth="1.6" />
          <path d="M3 2h8l2 3h5l-2 6-4 1-3-2H3z" fill="#fff" stroke="#444" strokeWidth=".6" />
        </svg>
        <svg className="ml-[10px]" width="17" height="18" viewBox="0 0 17 18">
          <path d="M.5 13.500h3v-3h3v-3h3v-3h3v-4h4v17H.5z" fill="#3c4042" />
          <path d="M1 14h2v3H1zM4 11h2v6H4zM7 8h2v9H7zM10 5h2v12h-2zM13 1h2.500v16H13z" fill="#fff" />
        </svg>
        <svg className="ml-[12px]" width="20" height="20" viewBox="0 0 20 20">
          <path d="M1 6h3l5-5v17l-5-5H1z" fill="#fff" stroke="#444" strokeWidth=".6" />
          <circle cx="13" cy="14" r="4.5" fill="#fff" stroke="#e01f1f" strokeWidth="2" /><path d="m9.800 10.800 6.400 6.400" stroke="#e01f1f" strokeWidth="2" />
        </svg>
        <div className="ml-[18px] w-[70px] text-center text-[14px] leading-[22px] tracking-[-0.2px] whitespace-nowrap pt-[2px]">
          <div>2:39 PM</div>
          <div>2/11/2015</div>
        </div>
      </div>
    </div>
  </footer>
);

export default function App() {
  return (
    <div className="w-[1920px] h-[1080px] overflow-hidden flex flex-col bg-white font-['Open_Sans',sans-serif]">
      <TitleBar />
      <AddressBar />
      <Header />
      <MainNav />
      <main className="flex pt-px font-['DejaVu_Sans',sans-serif] text-[11px] leading-[16px] tracking-[0.06px] text-black">
        <MembersPanel />
        <div className="w-[10px] h-[774px] bg-[#d3d3d3] flex items-center justify-center gap-px">
          <div className="w-px h-[10px] bg-[#8a8a8a]" />
          <div className="w-px h-[10px] bg-[#8a8a8a]" />
        </div>
        <DetailsPanel />
      </main>
      <div className="mt-auto"><Taskbar /></div>
    </div>
  );
}
